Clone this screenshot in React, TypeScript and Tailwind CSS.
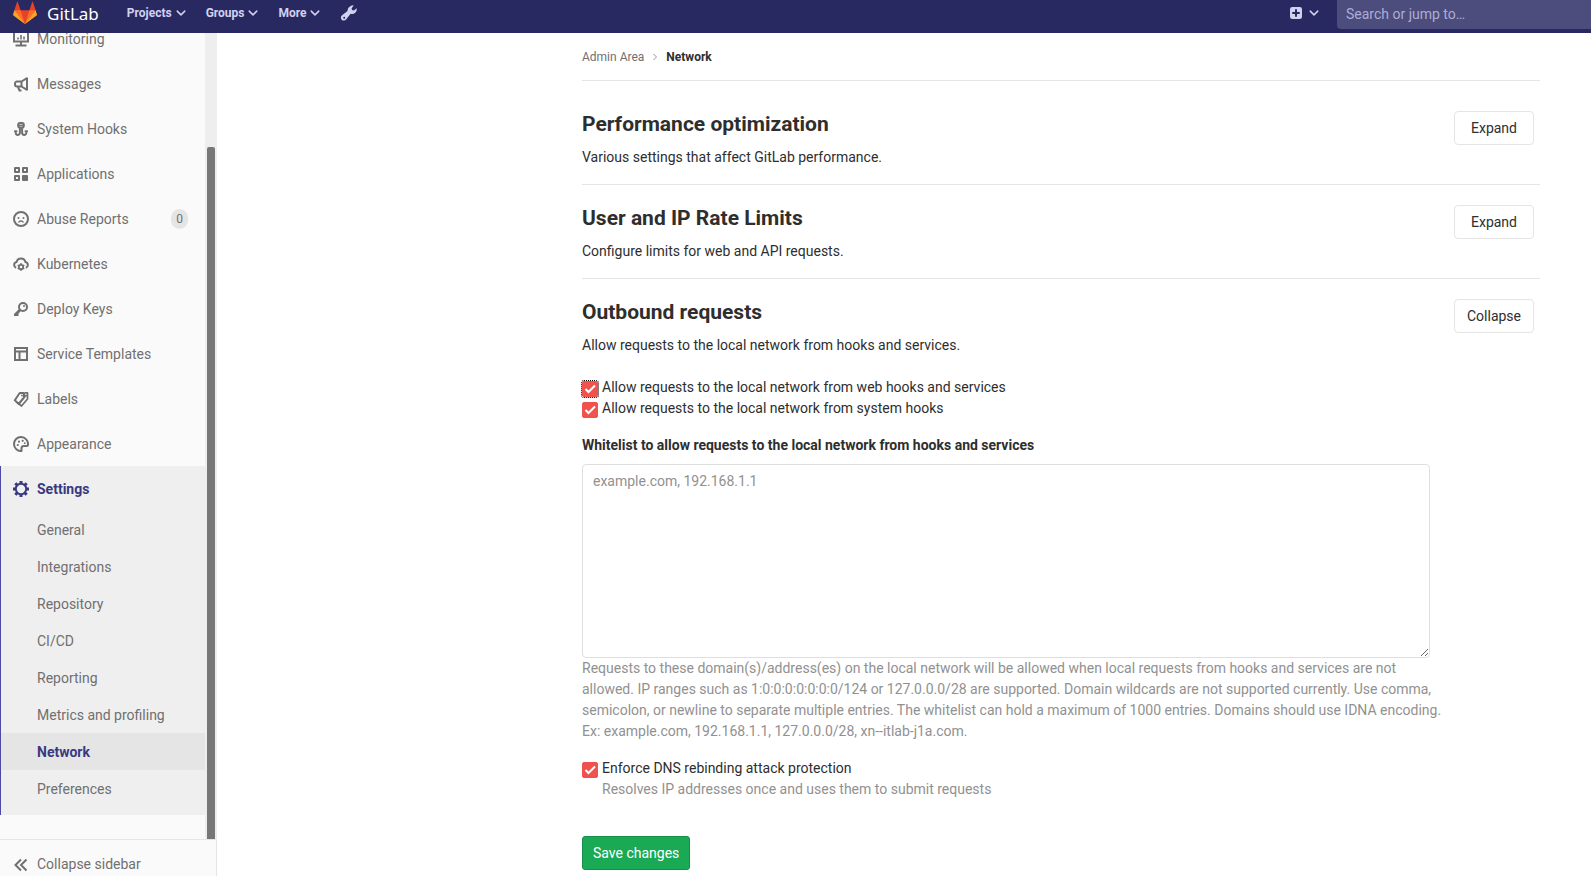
import { useState } from 'react';
import type { ReactNode } from 'react';
import clsx from 'clsx';

type IconProps = { className?: string; children?: ReactNode };

function Icon({ className = 'size-4', children }: IconProps) {
  return (
    <svg
      viewBox="0 0 16 16"
      className={clsx('shrink-0', className)}
      fill="none"
      stroke="currentColor"
      strokeWidth="2"
      aria-hidden="true"
    >
      {children}
    </svg>
  );
}

const ICONS: Record<string, ReactNode> = {
  monitor: (
    <>
      <path d="M1 1v9.500h14V1zM8 11v4M2.500 14.500h11" />
      <path d="M5 8.500V6.500M8 8.500V4M11 8.500V5.500" strokeWidth="1.600" />
    </>
  ),
  messages: (
    <>
      <path d="M14 2.200v11.600L8.500 10.500H4a2 2 0 0 1-2-2v-1a2 2 0 0 1 2-2h4.500z" strokeLinejoin="round" />
      <path d="M8.500 5v6M5 11l1.500 3.500h2" />
    </>
  ),
  hook: (
    <>
      <rect x="5.200" y="2" width="5.600" height="4.600" rx="1.800" />
      <path d="M5 4.300h6" strokeWidth="1.400" />
      <path d="M6.900 7v4.800a2.100 2.100 0 0 1-4.200 0V9.500M9.100 7v4.800a2.100 2.100 0 0 0 4.200 0V9.500" />
      <path d="M1 10.300h3.400M11.600 10.300H15" strokeWidth="1.400" />
    </>
  ),
  applications: (
    <>
      <path d="M2 2h4v4H2zM10 2h4v4h-4zM2 10h4v4H2z" strokeLinejoin="round" />
      <rect x="9" y="9" width="6" height="6" rx="1" fill="currentColor" stroke="none" />
    </>
  ),
  abuse: (
    <>
      <circle cx="8" cy="8" r="7" />
      <path d="M5.500 11.500c.6-1 1.500-1.500 2.500-1.500s1.900.5 2.500 1.500" strokeWidth="1.400" />
      <circle cx="5.500" cy="7" r="1" fill="currentColor" stroke="none" />
      <circle cx="10.500" cy="7" r="1" fill="currentColor" stroke="none" />
    </>
  ),
  kubernetes: (
    <>
      <path d="M3.200 11.800A3 3 0 0 1 3.600 6a4.500 4.500 0 0 1 8.800 0 3 3 0 0 1 .4 5.800" />
      <circle cx="8" cy="11" r="2.200" strokeWidth="1.800" />
      <path
        d="M8 7v1.500M8 13.500V15M4.700 9l1.200.8M10.100 12.200l1.200.8M4.700 13l1.200-.8M10.100 9.800l1.200-.8"
        strokeWidth="1.400"
      />
    </>
  ),
  key: (
    <>
      <circle cx="10" cy="6" r="4" />
      <path d="M7 9l-5 5" strokeWidth="2.800" />
      <path d="M1 14h3.500v-2.500" />
      <circle cx="11" cy="5" r="1" fill="currentColor" stroke="none" />
    </>
  ),
  template: <path d="M2 2h12v12H2zM2 5.500h12M6.500 6v8" />,
  labels: (
    <>
      <path d="M6.700 2H11v4.500L5.700 13 1.800 9.200z" strokeLinejoin="round" />
      <path d="M12 1.800h2.500V8L8.500 15l-3-2.500M11 6.500 13.500 4" strokeWidth="1.700" strokeLinejoin="round" />
      <circle cx="9" cy="4.500" r=".9" fill="currentColor" stroke="none" />
    </>
  ),
  appearance: (
    <>
      <path d="M8.500 15A7 7 0 1 1 15 8.500c0 1-.6 1.500-1.500 1.500H11c-1.500 0-2.500 1-2.500 2.300z" strokeLinejoin="round" />
      <circle cx="4.800" cy="9" r="1.100" fill="currentColor" stroke="none" />
      <circle cx="6" cy="5.700" r="1.100" fill="currentColor" stroke="none" />
      <circle cx="9.700" cy="4.800" r="1.100" fill="currentColor" stroke="none" />
      <circle cx="11.700" cy="7.200" r=".9" fill="currentColor" stroke="none" />
    </>
  ),
  settings: (
    <>
      <circle cx="8" cy="8" r="5.200" />
      <path
        d="M8 0v3M8 13v3M0 8h3M13 8h3M2.300 2.300l2 2M11.700 11.700l2 2M2.300 13.700l2-2M11.700 4.300l2-2"
        strokeWidth="3"
      />
    </>
  ),
  collapse: <path d="M8 2.500 2.500 8 8 13.500M13.500 2.500 8 8l5.500 5.500" />,
};

const NAV_ITEMS = [
  { icon: 'monitor', label: 'Monitoring' },
  { icon: 'messages', label: 'Messages' },
  { icon: 'hook', label: 'System Hooks' },
  { icon: 'applications', label: 'Applications' },
  { icon: 'abuse', label: 'Abuse Reports', count: 0 },
  { icon: 'kubernetes', label: 'Kubernetes' },
  { icon: 'key', label: 'Deploy Keys' },
  { icon: 'template', label: 'Service Templates' },
  { icon: 'labels', label: 'Labels' },
  { icon: 'appearance', label: 'Appearance' },
];

const SETTINGS_ITEMS = [
  'General',
  'Integrations',
  'Repository',
  'CI/CD',
  'Reporting',
  'Metrics and profiling',
  'Network',
  'Preferences',
];

function ChevronDown() {
  return (
    <Icon className="size-[10px]">
      <path d="M2 5l6 6 6-6" strokeWidth="2.400" strokeLinecap="round" strokeLinejoin="round" />
    </Icon>
  );
}

function Logo() {
  return (
    <svg viewBox="0 0 36 36" className="size-6" aria-hidden="true">
      <path fill="#e24329" d="M2 14l9.380 9v-9l-4-12.280c-.205-.632-1.176-.632-1.380 0z" />
      <path fill="#e24329" d="M34 14l-9.380 9v-9l4-12.280c.205-.632 1.176-.632 1.380 0z" />
      <path fill="#e24329" d="M18 34.380 3 14h30z" />
      <path fill="#fc6d26" d="M18 34.380 11.380 14H2l4 11z" />
      <path fill="#fc6d26" d="M18 34.380 24.620 14H34l-4 11z" />
      <path fill="#fca326" d="M2 14 .1 20.160c-.18.565 0 1.200.5 1.560L18 34.380z" />
      <path fill="#fca326" d="M34 14l1.900 6.160c.18.565 0 1.200-.5 1.560L18 34.380z" />
    </svg>
  );
}

function Header() {
  return (
    <header className="flex h-[33px] shrink-0 items-start bg-[#292961] text-[#d1d1f0]">
      <a href="#" className="flex h-[26px] items-center gap-[10px] pl-[13px] text-white">
        <Logo />
        <span className="font-['Noto_Sans'] text-[17px]">GitLab</span>
      </a>
      <nav className="ml-7 flex h-[26px] items-center gap-5 text-xs font-bold">
        {['Projects', 'Groups', 'More'].map((label) => (
          <button key={label} type="button" className="flex items-center gap-1">
            {label}
            <ChevronDown />
          </button>
        ))}
        <a href="#" aria-label="Admin Area" className="ml-px">
          <Icon>
            <path
              d="M9.300 1.300a4.700 4.700 0 0 1 3.300-.9l-2 3 .4 1.700 2 .3 2.600-2.200a4.700 4.700 0 0 1-6 5.600l-4.500 5.600a2.900 2.900 0 1 1-4-4.100l5.400-4.400a4.700 4.700 0 0 1 2.800-4.600zM3.200 11.700a1 1 0 1 0 0 2 1 1 0 0 0 0-2z"
              fill="currentColor"
              stroke="none"
              fillRule="evenodd"
            />
          </Icon>
        </a>
      </nav>
      <button type="button" aria-label="New" className="mr-[18px] ml-auto flex h-[26px] items-center gap-[7px]">
        <Icon className="size-3">
          <path
            d="M3 0h10a3 3 0 0 1 3 3v10a3 3 0 0 1-3 3H3a3 3 0 0 1-3-3V3a3 3 0 0 1 3-3zM6.700 3v3.700H3v2.600h3.700V13h2.600V9.300H13V6.700H9.300V3z"
            fill="currentColor"
            stroke="none"
            fillRule="evenodd"
          />
        </Icon>
        <ChevronDown />
      </button>
      <input
        type="text"
        aria-label="Search"
        placeholder="Search or jump to…"
        className="h-[29px] w-[254px] rounded-bl bg-[#4c4c7d] px-[9px] pb-[2px] text-sm placeholder:text-[#adadd6]"
      />
    </header>
  );
}

function Sidebar() {
  return (
    <aside className="flex w-[217px] shrink-0 flex-col bg-[#fafafa] text-[#707070]">
      <div className="flex min-h-0 flex-1">
        <nav className="min-w-0 flex-1 overflow-hidden">
          {/* list is scrolled part way under the header */}
          <ul className="-mt-[17px]">
            {NAV_ITEMS.map(({ icon, label, count }) => (
              <li key={label}>
                <a href="#" className="flex h-[45px] items-center gap-2 pt-px pr-[17px] pl-[13px]">
                  <Icon>{ICONS[icon]}</Icon>
                  <span className="flex-1">{label}</span>
                  {count !== undefined && (
                    <span className="rounded-full bg-[#e5e5e5] px-[5px] text-xs leading-5">{count}</span>
                  )}
                </a>
              </li>
            ))}
            <li className="border-l border-[#4b4ba3] bg-[#efefef] pb-2">
              <a href="#" className="flex h-[45px] items-center gap-2 pt-px pl-3 font-bold text-[#393982]">
                <Icon>{ICONS.settings}</Icon>
                <span>Settings</span>
              </a>
              <ul>
                {SETTINGS_ITEMS.map((label) => (
                  <li key={label}>
                    <a
                      href="#"
                      className={clsx(
                        'flex h-[37px] items-center pt-[2px] pl-9',
                        label === 'Network' && 'bg-[#e5e5e5] font-bold text-[#393982]'
                      )}
                    >
                      {label}
                    </a>
                  </li>
                ))}
              </ul>
            </li>
          </ul>
        </nav>
        <div className="flex w-3 justify-center bg-[#eeeeee] pt-[114px]">
          <div className="w-2 rounded-t-[2px] bg-[#777777]" />
        </div>
      </div>
      <button
        type="button"
        className="flex items-center gap-2 border-t border-r border-[#e5e5e5] pt-[14px] pb-px pl-[13px] text-left"
      >
        <Icon>{ICONS.collapse}</Icon>
        Collapse sidebar
      </button>
    </aside>
  );
}

type SectionProps = { title: string; description: string; open?: boolean; children?: ReactNode };

function Section({ title, description, open = false, children }: SectionProps) {
  return (
    <section className={clsx('pt-5', !open && 'border-b border-[#e5e5e5] pb-4')}>
      <div className="flex items-start justify-between pr-[6px]">
        <div>
          <h4 className="mb-[10px] text-[21px] leading-[26px] font-bold">{title}</h4>
          <p>{description}</p>
        </div>
        <button
          type="button"
          aria-expanded={open}
          className="h-[34px] w-20 rounded border border-[#e5e5e5] bg-white"
        >
          {open ? 'Collapse' : 'Expand'}
        </button>
      </div>
      {children}
    </section>
  );
}

type CheckFieldProps = { id: string; label: string; help?: string; focused?: boolean };

function CheckField({ id, label, help, focused = false }: CheckFieldProps) {
  const [checked, setChecked] = useState(true);

  return (
    <div className="flex items-start gap-1">
      <span className="mt-1 grid shrink-0">
        <input
          id={id}
          type="checkbox"
          checked={checked}
          onChange={(e) => setChecked(e.target.checked)}
          className={clsx(
            'col-start-1 row-start-1 size-4 appearance-none rounded-[2px] border border-[#cccccc] checked:border-[#f0524d] checked:bg-[#f0524d]',
            focused && 'outline-1 outline-black outline-dotted'
          )}
        />
        {checked && (
          <Icon className="pointer-events-none col-start-1 row-start-1 size-4 text-white">
            <path d="M3.500 8l3 3 6.500-6.500" />
          </Icon>
        )}
      </span>
      <div>
        <label htmlFor={id} className="block">
          {label}
        </label>
        {help && <p className="text-[#919191]">{help}</p>}
      </div>
    </div>
  );
}

export default function App() {
  return (
    <div className="flex h-screen flex-col overflow-hidden bg-white font-[Roboto,sans-serif] text-sm leading-[21px] text-[#2e2e2e]">
      <Header />
      <div className="flex min-h-0 flex-1">
        <Sidebar />
        <main className="min-w-0 flex-1 overflow-hidden pr-[51px] pl-[365px]">
          <nav
            aria-label="Breadcrumb"
            className="mb-[10px] flex h-12 items-center border-b border-[#e5e5e5] text-xs"
          >
            <a href="#" className="text-[#707070]">
              Admin Area
            </a>
            <Icon className="mx-[7px] size-2 text-[#999999]">
              <path d="M5 2l6 6-6 6" />
            </Icon>
            <a href="#" className="font-bold">
              Network
            </a>
          </nav>

          <Section
            title="Performance optimization"
            description="Various settings that affect GitLab performance."
          />
          <Section
            title="User and IP Rate Limits"
            description="Configure limits for web and API requests."
          />
          <Section
            title="Outbound requests"
            description="Allow requests to the local network from hooks and services."
            open
          >
            <form className="mt-[21px] max-w-[848px]" onSubmit={(e) => e.preventDefault()}>
              <CheckField
                id="allow-web-hooks"
                label="Allow requests to the local network from web hooks and services"
                focused
              />
              <CheckField
                id="allow-system-hooks"
                label="Allow requests to the local network from system hooks"
              />

              <label htmlFor="whitelist" className="mt-4 mb-2 block font-bold">
                Whitelist to allow requests to the local network from hooks and services
              </label>
              <textarea
                id="whitelist"
                placeholder="example.com, 192.168.1.1"
                className="block h-[194px] w-full rounded border border-[#dfdfdf] px-[10px] py-[6px] placeholder:text-[#919191]"
              />
              <p className="-mr-4 mb-4 text-[#919191]">
                Requests to these domain(s)/address(es) on the local network will be allowed when local requests from
                hooks and services are not allowed. IP ranges such as 1:0:0:0:0:0:0:0/124 or 127.0.0.0/28 are supported.
                Domain wildcards are not supported currently. Use comma, semicolon, or newline to separate multiple
                entries. The whitelist can hold a maximum of 1000 entries. Domains should use IDNA encoding. Ex:
                example.com, 192.168.1.1, 127.0.0.0/28, xn--itlab-j1a.com.
              </p>

              <CheckField
                id="dns-rebinding"
                label="Enforce DNS rebinding attack protection"
                help="Resolves IP addresses once and uses them to submit requests"
              />

              <button
                type="submit"
                className="mt-9 h-[34px] rounded-[3px] border border-[#168f48] bg-[#1aaa55] px-[10px] text-white"
              >
                Save changes
              </button>
            </form>
          </Section>
        </main>
      </div>
    </div>
  );
}
